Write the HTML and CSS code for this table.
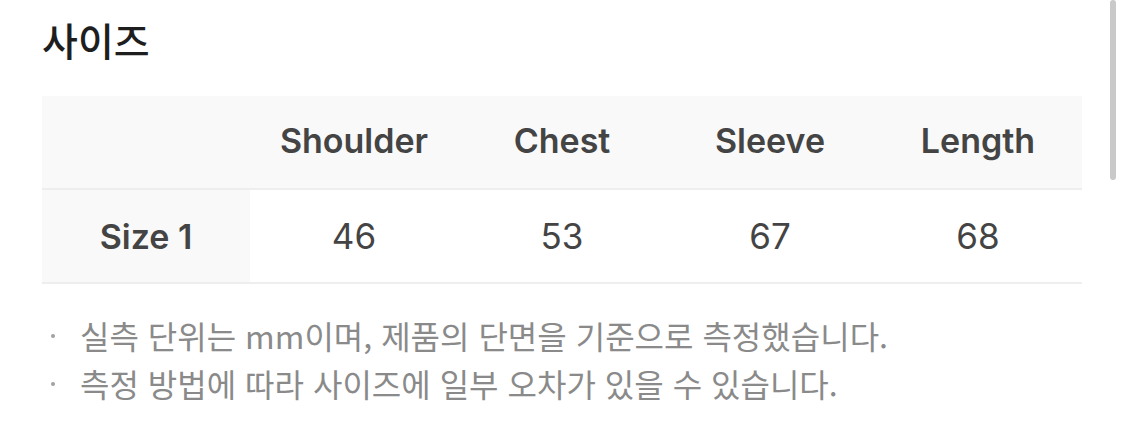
FILE: index.html
```html
<!DOCTYPE html>
<html lang="ko">
<head>
<meta charset="utf-8">
<link rel="stylesheet" href="styles.css">
</head>
<body>
<div class="page">
  <h2 class="title">사이즈</h2>
  <table class="size-table">
    <thead>
      <tr>
        <th class="corner"></th>
        <th>Shoulder</th>
        <th>Chest</th>
        <th>Sleeve</th>
        <th>Length</th>
      </tr>
    </thead>
    <tbody>
      <tr>
        <th class="row-head">Size 1</th>
        <td>46</td>
        <td>53</td>
        <td>67</td>
        <td>68</td>
      </tr>
    </tbody>
  </table>
  <ul class="notes">
    <li>실측 단위는 mm이며, 제품의 단면을 기준으로 측정했습니다.</li>
    <li>측정 방법에 따라 사이즈에 일부 오차가 있을 수 있습니다.</li>
  </ul>
</div>
<div class="scrollbar"></div>
</body>
</html>
```
FILE: styles.css
```css
html, body {
  margin: 0;
  padding: 0;
  background: #ffffff;
}
body {
  font-family: Inter, "Noto Sans CJK KR", sans-serif;
  color: #222;
  width: 1125px;
  height: 441px;
  overflow: hidden;
  position: relative;
}
.page {
  padding: 13px 0 0 42px;
  width: 1040px;
}
.title {
  margin: 0;
  font-family: "Noto Sans CJK KR", sans-serif;
  font-size: 39px;
  font-weight: 500;
  line-height: 52px;
  color: #1e1e1e;
}
.size-table {
  margin-top: 31px;
  width: 1040px;
  border-collapse: separate;
  border-spacing: 0;
  table-layout: fixed;
}
.size-table th,
.size-table td {
  box-sizing: border-box;
  width: 208px;
  height: 94px;
  text-align: center;
  padding: 0;
  color: #444;
  border-bottom: 2px solid #eeeeee;
}
.size-table thead th {
  background: #f9f9f9;
  font-size: 34px;
  font-weight: 600;
  padding-bottom: 4px;
}
.size-table .row-head {
  background: #f9f9f9;
  font-size: 34px;
  font-weight: 600;
  padding-top: 0;
}
.size-table td {
  background: #ffffff;
  font-size: 35px;
  font-weight: 400;
  padding-top: 0;
}
.notes {
  list-style: none;
  margin: 27px 0 0 0;
  padding: 0;
}
.notes li {
  position: relative;
  padding-left: 38px;
  font-family: "Noto Sans CJK KR", sans-serif;
  font-size: 32px;
  line-height: 48px;
  color: #8a8a8a;
}
.notes li::before {
  content: "";
  position: absolute;
  left: 9px;
  top: 23px;
  width: 4px;
  height: 4px;
  border-radius: 50%;
  background: #a0a0a0;
}
.scrollbar {
  position: absolute;
  left: 1110px;
  top: 0;
  width: 6px;
  height: 180px;
  border-radius: 3px;
  background: #c9c9c9;
}
```
